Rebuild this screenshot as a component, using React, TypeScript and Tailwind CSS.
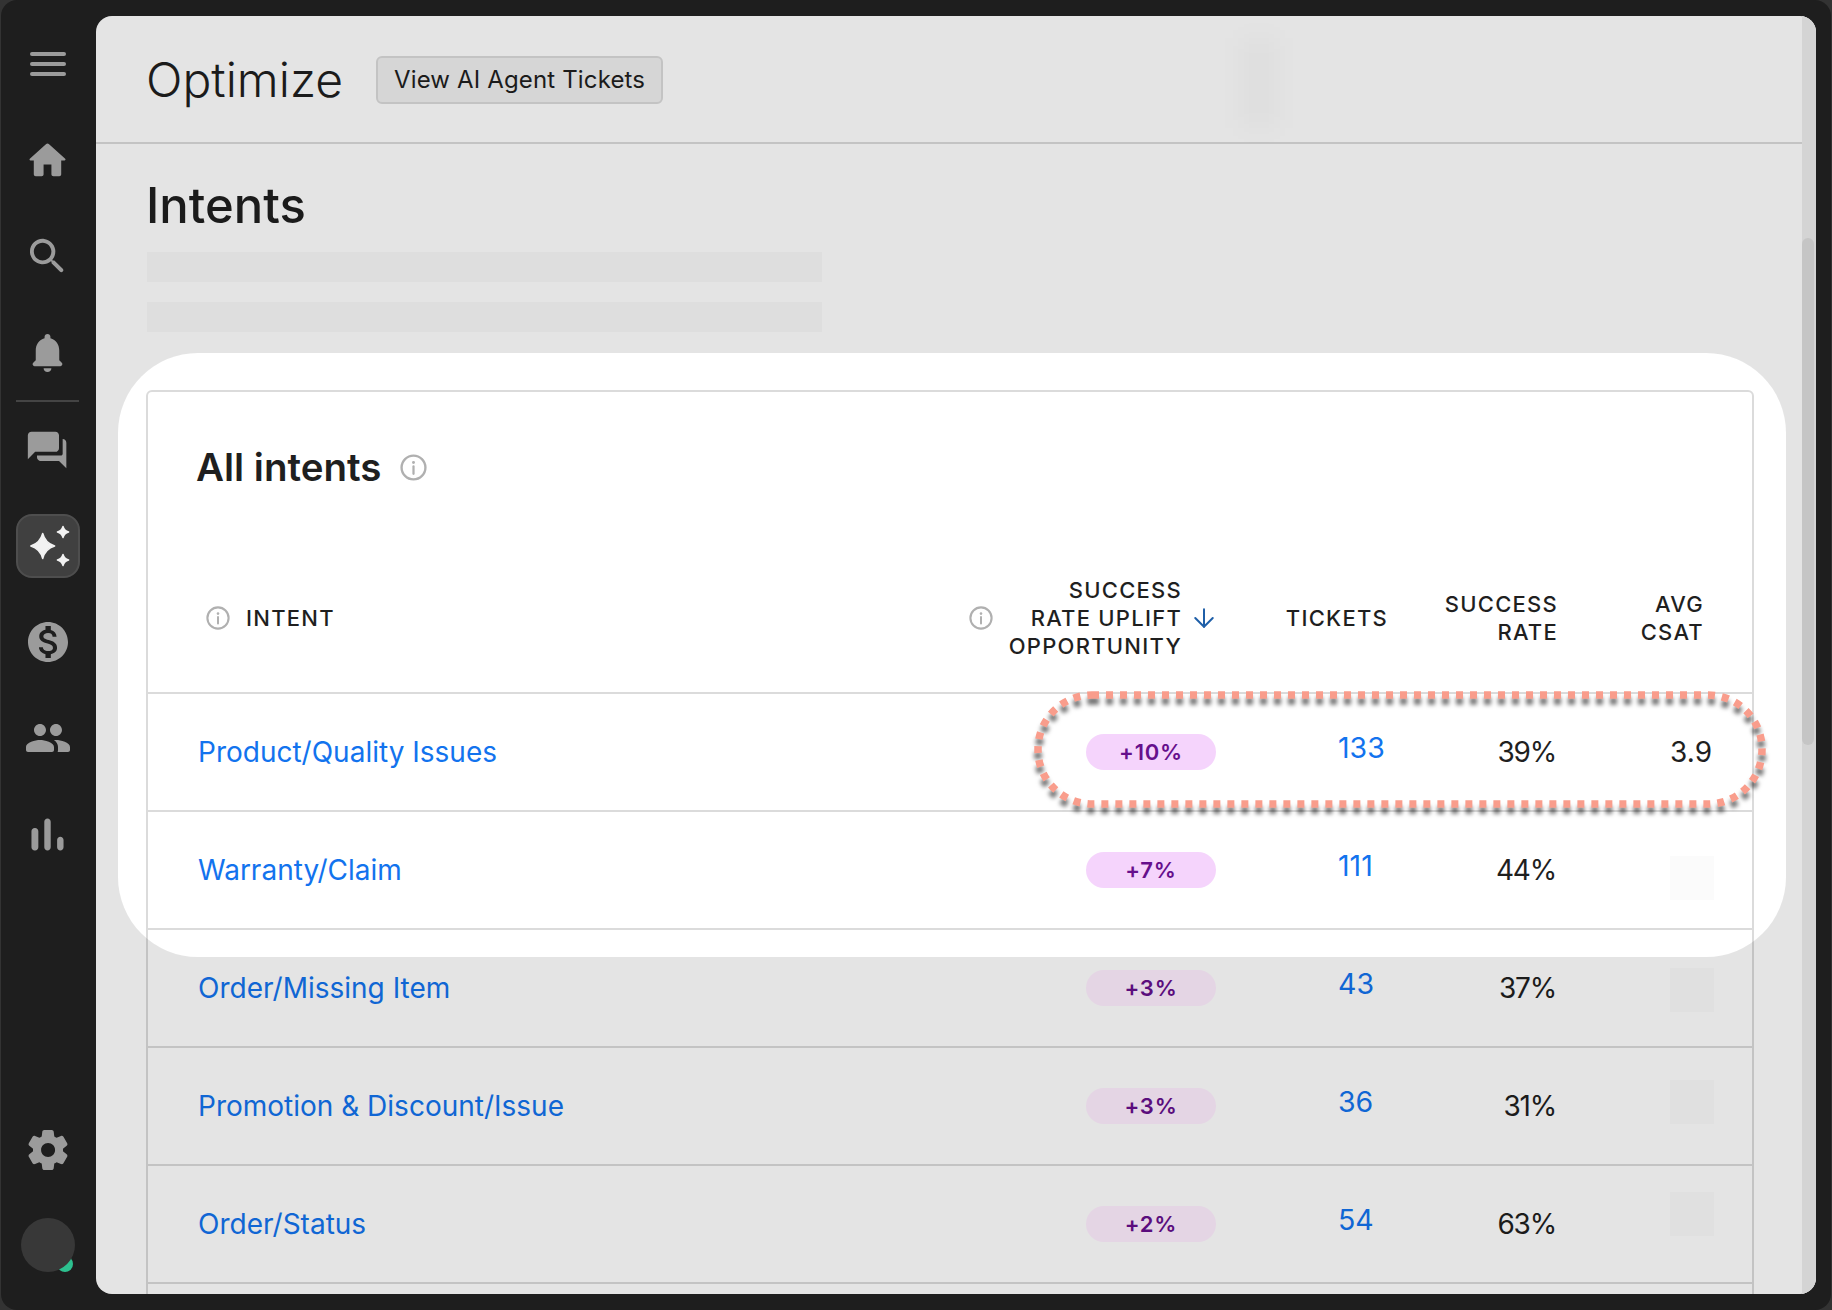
// src/App.tsx
import { ArrowDown } from "lucide-react";

const ICONS = {
  home: "M10 19v-5h4v5c0 .55.45 1 1 1h3c.55 0 1-.45 1-1v-7h1.7c.46 0 .68-.57.33-.87L12.67 3.6c-.38-.34-.96-.34-1.34 0l-8.36 7.53c-.34.3-.13.87.33.87H5v7c0 .55.45 1 1 1h3c.55 0 1-.45 1-1z",
  search: "M15.5 14h-.79l-.28-.27c1.2-1.4 1.82-3.31 1.48-5.34-.47-2.78-2.79-5-5.59-5.34-4.2-.52-7.75 3.04-7.22 7.24.34 2.8 2.56 5.12 5.34 5.59 2.03.34 3.94-.28 5.34-1.48l.27.28v.79l4.25 4.25c.41.41 1.08.41 1.49 0 .41-.41.41-1.08 0-1.49L15.5 14zm-6 0C7.01 14 5 11.99 5 9.5S7.01 5 9.5 5 14 7.01 14 9.5 11.99 14 9.5 14z",
  bell: "M12 22c1.1 0 2-.9 2-2h-4c0 1.1.9 2 2 2zm6-6v-5c0-3.07-1.63-5.64-4.5-6.32V4c0-.83-.67-1.5-1.5-1.5s-1.5.67-1.5 1.5v.68C7.64 5.36 6 7.92 6 11v5l-1.29 1.29c-.63.63-.19 1.71.7 1.71h13.17c.89 0 1.34-1.08.71-1.71L18 16z",
  forum: "M21 6h-1v8c0 .55-.45 1-1 1H6v1c0 1.1.9 2 2 2h10l4 4V8c0-1.1-.9-2-2-2zm-3 5V4c0-1.1-.9-2-2-2H3c-1.1 0-2 .9-2 2v13l4-4h11c1.1 0 2-.9 2-2z",
  dollar: "M12 2C6.48 2 2 6.48 2 12s4.48 10 10 10 10-4.48 10-10S17.52 2 12 2zm1.41 16.09V20h-2.67v-1.93c-1.71-.36-3.16-1.46-3.27-3.4h1.96c.1 1.05.82 1.87 2.65 1.87 1.96 0 2.4-.98 2.4-1.59 0-.83-.44-1.61-2.67-2.14-2.48-.6-4.18-1.62-4.18-3.67 0-1.72 1.39-2.84 3.11-3.21V4h2.67v1.95c1.86.45 2.79 1.86 2.87 3.39H14.3c-.05-1.11-.64-1.87-2.22-1.87-1.5 0-2.4.68-2.4 1.64 0 .84.65 1.39 2.67 1.91s4.18 1.39 4.18 3.91c-.01 1.83-1.38 2.83-3.12 3.16z",
  people: "M16 11c1.66 0 2.99-1.34 2.99-3S17.66 5 16 5s-3 1.34-3 3 1.34 3 3 3zm-8 0c1.66 0 2.99-1.34 2.99-3S9.66 5 8 5 5 6.34 5 8s1.34 3 3 3zm0 2c-2.33 0-7 1.17-7 3.5V18c0 .55.45 1 1 1h12c.55 0 1-.45 1-1v-1.5C15 14.17 10.33 13 8 13zm8 0c-.29 0-.62.02-.97.05.02.01.03.03.04.04 1.14.83 1.93 1.94 1.93 3.41V18c0 .35-.07.69-.18 1H22c.55 0 1-.45 1-1v-1.5c0-2.33-4.67-3.5-7-3.5z",
  bars: "M6.4 9.2h.2c.77 0 1.4.63 1.4 1.4v7c0 .77-.63 1.4-1.4 1.4h-.2c-.77 0-1.4-.63-1.4-1.4v-7c0-.77.63-1.4 1.4-1.4zM12 5c.77 0 1.4.63 1.4 1.4v11.2c0 .77-.63 1.4-1.4 1.4-.77 0-1.4-.63-1.4-1.4V6.4c0-.77.63-1.4 1.4-1.4zm5.6 8c.77 0 1.4.63 1.4 1.4v3.2c0 .77-.63 1.4-1.4 1.4-.77 0-1.4-.63-1.4-1.4v-3.2c0-.77.63-1.4 1.4-1.4z",
  gear: "M19.5 12c0-.23-.01-.45-.03-.68l1.86-1.41c.4-.3.51-.86.26-1.3l-1.87-3.23c-.25-.44-.79-.62-1.25-.42l-2.15.91c-.37-.26-.76-.49-1.17-.68l-.29-2.31c-.06-.5-.49-.88-.99-.88h-3.73c-.51 0-.94.38-1 .88l-.29 2.31c-.41.19-.8.42-1.17.68l-2.15-.91c-.46-.2-1-.02-1.25.42L2.41 8.62c-.25.44-.14.99.26 1.3l1.86 1.41c-.02.22-.03.44-.03.67s.01.45.03.68l-1.86 1.41c-.4.3-.51.86-.26 1.3l1.87 3.23c.25.44.79.62 1.25.42l2.15-.91c.37.26.76.49 1.17.68l.29 2.31c.06.5.49.88.99.88h3.73c.5 0 .93-.38.99-.88l.29-2.31c.41-.19.8-.42 1.17-.68l2.15.91c.46.2 1 .02 1.25-.42l1.87-3.23c.25-.44.14-.99-.26-1.3l-1.86-1.41c.03-.23.04-.45.04-.68zm-7.46 3.5c-1.93 0-3.5-1.57-3.5-3.5s1.57-3.5 3.5-3.5 3.5 1.57 3.5 3.5-1.57 3.5-3.5 3.5z",
};

const rows = [
  { name: "Product/Quality Issues", uplift: "+10%", tickets: "133", rate: "39%", csat: "3.9", pill: "bg-[#f5d4fc]", box: "" },
  { name: "Warranty/Claim", uplift: "+7%", tickets: "111", rate: "44%", csat: "", pill: "bg-[#f5d4fc]", box: "mt-4" },
  { name: "Order/Missing Item", uplift: "+3%", tickets: "43", rate: "37%", csat: "", pill: "bg-[#ffefff]", box: "mt-1" },
  { name: "Promotion & Discount/Issue", uplift: "+3%", tickets: "36", rate: "31%", csat: "", pill: "bg-[#ffefff]", box: "mb-2" },
  { name: "Order/Status", uplift: "+2%", tickets: "54", rate: "63%", csat: "", pill: "bg-[#ffefff]", box: "mb-5" },
];

const NavIcon = ({ d, size }: { d: string; size: number }) => (
  <div className="flex h-24 items-center justify-center text-[#9b9b9b]">
    <svg width={size} height={size} viewBox="0 0 24 24" fill="currentColor">
      <path d={d} />
    </svg>
  </div>
);

const InfoIcon = ({ size }: { size: number }) => (
  <svg width={size} height={size} viewBox="0 0 24 24" fill="none" className="shrink-0 text-[#b0b0b0]">
    <circle cx="12" cy="12" r="10.6" stroke="currentColor" strokeWidth="2.1" />
    <circle cx="12" cy="7.6" r="1.3" fill="currentColor" />
    <path d="M12 11v6.6" stroke="currentColor" strokeWidth="2" strokeLinecap="round" />
  </svg>
);

const Sidebar = () => (
  <aside className="flex w-[95px] shrink-0 flex-col pr-0.5">
    <div className="flex h-24 flex-col items-center justify-center gap-1.5">
      <div className="h-1 w-9 rounded-full bg-[#9b9b9b]" />
      <div className="h-1 w-9 rounded-full bg-[#9b9b9b]" />
      <div className="h-1 w-9 rounded-full bg-[#9b9b9b]" />
    </div>
    <NavIcon d={ICONS.home} size={47} />
    <NavIcon d={ICONS.search} size={47} />
    <NavIcon d={ICONS.bell} size={47} />
    <div className="mx-[15px] h-0.5 bg-[#444444]" />
    <NavIcon d={ICONS.forum} size={44} />
    <div className="flex h-24 items-center justify-center">
      <div className="h-16 w-16 rounded-2xl border-2 border-[#4e4e4e] bg-[#404040]">
        <svg width="60" height="60" viewBox="0 0 60 60" fill="#f2f2f2" stroke="#f2f2f2" strokeWidth="1.5" strokeLinejoin="round">
          <path d="M24.7 17.5C26.4 24 30 28 36.6 30C30 32 26.4 36 24.7 42.5C23 36 19.4 32 12.8 30C19.4 28 23 24 24.7 17.5Z" />
          <path d="M45 10.5C45.8 13.5 47.5 15.2 50.6 16C47.5 16.8 45.8 18.5 45 21.5C44.2 18.5 42.5 16.8 39.4 16C42.5 15.2 44.2 13.5 45 10.5Z" />
          <path d="M45 38.5C45.8 41.5 47.5 43.2 50.6 44C47.5 44.8 45.8 46.5 45 49.5C44.2 46.5 42.5 44.8 39.4 44C42.5 43.2 44.2 41.5 45 38.5Z" />
        </svg>
      </div>
    </div>
    <NavIcon d={ICONS.dollar} size={48} />
    <NavIcon d={ICONS.people} size={48} />
    <NavIcon d={ICONS.bars} size={55} />
    <div className="mt-auto">
      <NavIcon d={ICONS.gear} size={48} />
    </div>
    <div className="flex h-24 justify-center pt-5">
      <div className="relative h-[54px] w-[54px]">
        <div className="absolute bottom-0 right-[2px] h-4 w-4 rounded-full bg-[#2dc08f]" />
        <div className="absolute inset-0 rounded-full bg-[#383838]" />
      </div>
    </div>
  </aside>
);

const App = () => {
  return (
    <div className="h-[1310px] w-[1832px] overflow-hidden bg-[#333333] font-[Inter,sans-serif]">
      <div className="mx-px flex h-full rounded-2xl bg-[#1e1e1e] py-4 pr-[15px]">
        <Sidebar />
        <main className="relative flex min-w-0 flex-1 overflow-hidden rounded-2xl bg-white text-[#1f1f1f]">
          <div className="min-w-0 flex-1">
            <header className="flex h-32 items-center border-b-2 border-[#dbdbdb] pt-0.5 pl-[50px]">
              <h1 className="text-[48px] leading-none font-light">Optimize</h1>
              <button className="ml-[33px] h-12 w-[287px] rounded-md border-2 border-[#dbdbdb] bg-[#f0f0f0] text-[24px] tracking-[0.15px]">
                View AI Agent Tickets
              </button>
            </header>
            <section className="pl-[50px]">
              <h2 className="flex h-[108px] items-center pt-3.5 text-[49px] leading-none font-medium">Intents</h2>
              <div className="ml-px h-[30px] w-[675px] bg-[#f9f9f9]" />
              <div className="mt-5 ml-px h-[30px] w-[675px] bg-[#f9f9f9]" />
              <div className="mt-[58px] h-[1000px] w-[1608px] rounded-md border-2 border-[#dbdbdb]">
                <div className="flex h-[152px] items-center gap-[19px] pb-0.5 pl-12">
                  <h3 className="text-[38.5px] leading-none font-semibold">All intents</h3>
                  <InfoIcon size={27} />
                </div>
                <div className="flex h-[150px] items-center border-b-2 border-[#dbdbdb] text-[22px] leading-7 font-medium tracking-[1.25px]">
                  <div className="flex flex-1 items-center gap-4 pl-[58px]">
                    <InfoIcon size={24} />
                    INTENT
                  </div>
                  <div className="flex w-[270px] items-center pl-2">
                    <InfoIcon size={24} />
                    <div className="ml-auto text-right">
                      SUCCESS
                      <br />
                      RATE UPLIFT
                      <br />
                      OPPORTUNITY
                    </div>
                    <ArrowDown size={30} strokeWidth={1.6} className="mr-3 ml-[7px] text-[#1f5fa8]" />
                  </div>
                  <div className="w-[170px] pr-[13px] text-right">TICKETS</div>
                  <div className="w-[170px] pr-[13px] text-right">
                    SUCCESS
                    <br />
                    RATE
                  </div>
                  <div className="w-[181px] pr-12 text-right">
                    AVG
                    <br />
                    CSAT
                  </div>
                </div>
                {rows.map((row, i) => (
                  <div key={row.name} className="relative flex h-[118px] items-center border-b-2 border-[#dbdbdb] text-[28px]">
                    <div className="flex-1 pl-[50px] text-[#1273ee]">{row.name}</div>
                    <div className="w-[270px] pl-[125px]">
                      <div className={`flex h-9 w-[130px] items-center justify-center rounded-[18px] text-[22px] font-semibold tracking-[0.8px] text-[#660f8c] ${row.pill}`}>
                        {row.uplift}
                      </div>
                    </div>
                    <div className="w-[170px] pb-2 pl-[107px] text-[28.5px] text-[#1273ee]">{row.tickets}</div>
                    <div className="w-[170px] pr-[15px] text-right tracking-[-1.2px]">{row.rate}</div>
                    <div className="flex w-[181px] justify-end pr-[38px]">
                      {row.csat ? <span className="pr-[2px]">{row.csat}</span> : <div className={`h-11 w-11 bg-[#fbfbfb] ${row.box}`} />}
                    </div>
                    {i === 0 && (
                      <svg width="740" height="126" viewBox="0 0 740 126" fill="none" className="pointer-events-none absolute top-[-7px] left-[882px] drop-shadow-[0_6px_2px_rgba(0,0,0,0.55)]">
                        <rect x="8" y="8" width="724" height="109" rx="54" stroke="#f99d8c" strokeWidth="7.5" strokeDasharray="7 7" />
                      </svg>
                    )}
                  </div>
                ))}
              </div>
            </section>
          </div>
          <div className="w-3.5 shrink-0 bg-[#ededed]">
            <div className="mt-[222px] h-[507px] w-3 rounded-full bg-[#dddddd]" />
          </div>
          {/* dim layer with a cut out around the first rows */}
          <div className="pointer-events-none absolute top-[337px] left-[22px] h-[604px] w-[1668px] rounded-[80px] shadow-[0_0_0_2000px_rgba(0,0,0,0.106)]" />
          <div className="pointer-events-none absolute top-[22px] left-[1145px] h-[90px] w-9 bg-black/[0.025] blur-md" />
        </main>
      </div>
    </div>
  );
};

export default App;
